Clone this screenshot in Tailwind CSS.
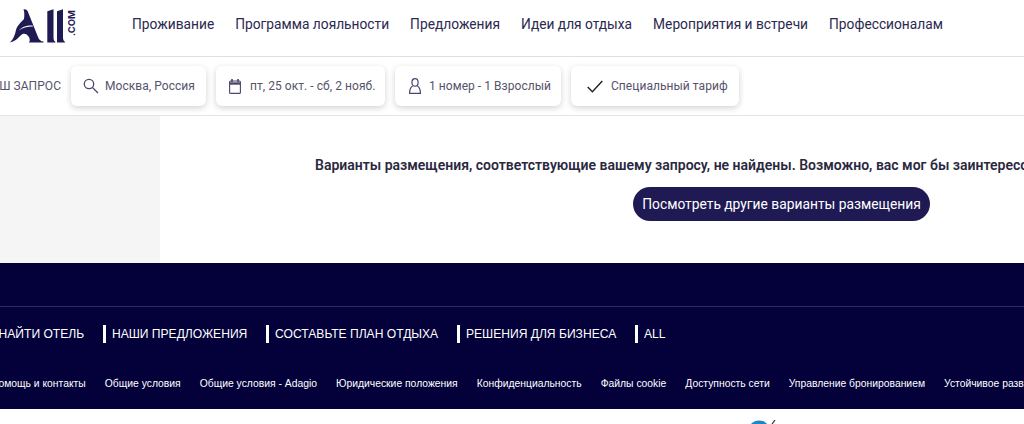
<!DOCTYPE html>
<html lang="ru">
<head>
<meta charset="utf-8">
<script src="https://cdn.jsdelivr.net/npm/@tailwindcss/browser@4"></script>
</head>
<body class="w-[1024px] h-[424px] overflow-hidden bg-white font-['Roboto',sans-serif]">
<header class="h-[57px] flex items-center border-b border-[#e0e0e0]">
  <a class="w-[132px] h-[56px] shrink-0 block relative">
    <svg width="70" height="45" viewBox="0 0 70 45" fill="#1f1a54" class="block">
      <path d="M23.5 9.3C25.5 9 27 9.8 27.8 11.5L38 37C39 40 41 41.2 43.5 41.6V42.4H29C30 41 30 39.5 29 37C27 34 25 33 22.5 34C19 36 17 41 10 42.4C13.5 39 15 35 16 30C17 26 21 22 24 19C24.5 15 24.5 12 23.5 9.3Z"/>
      <path d="M18.5 30.5C22 27 26 25.2 32.5 25.4L33 26.6C27.5 26.4 23 27.8 18.5 30.5Z" fill="#fff"/>
      <path d="M47.3 11.2L53.5 9.2V37.6C53.5 40 54.2 41.2 55.4 41.8V42.4H47.3Z"/>
      <path d="M57 11.2L63 9.2V37.6C63 40 63.8 41.2 65 41.8V42.4H57Z"/>
    </svg>
    <span class="absolute left-[57px] top-[18px] w-[30px] h-[10px] flex items-center justify-center text-[9.5px] leading-[10px] font-bold text-[#1f1a54] -rotate-90 font-['Inter',sans-serif]">.COM</span>
  </a>
  <nav class="flex gap-[21px] mb-[8px] text-[13.75px] text-[#2b2950] whitespace-nowrap">
    <a>Проживание</a><a>Программа лояльности</a><a>Предложения</a><a>Идеи для отдыха</a><a>Мероприятия и встречи</a><a>Профессионалам</a>
  </nav>
</header>

<section class="h-[59px] flex items-center gap-[10px] border-b border-[#e4e4e4] whitespace-nowrap text-[12px] text-[#55536b] tracking-[0.05px]">
  <span class="w-[61px] shrink-0 flex justify-end overflow-hidden"><span class="shrink-0">ВАШ ЗАПРОС</span></span>
  <div class="w-[135px] h-[40px] flex items-center gap-[6px] pl-[12px] rounded-md bg-white shadow-[0_2px_6px_rgba(0,0,0,0.18)]">
    <svg width="16" height="16" viewBox="0 0 16 16" fill="none" stroke="#4a4670" stroke-width="1.3"><circle cx="6" cy="6" r="4.7"/><path d="M9.5 9.5L15 15"/></svg>
    <span>Москва, Россия</span>
  </div>
  <div class="w-[169px] h-[40px] flex items-center gap-[9px] pl-[13px] rounded-md bg-white shadow-[0_2px_6px_rgba(0,0,0,0.18)]">
    <svg width="12" height="15" viewBox="0 0 12 15" fill="none" stroke="#4a4670" stroke-width="1.1"><rect x="0.6" y="2" width="10.8" height="12.4" rx="1"/><path d="M0.6 4.5H11.4" stroke-width="2.4"/><path d="M3 0V3M9 0V3" stroke-width="1.6"/></svg>
    <span>пт, 25 окт. - сб, 2 нояб.</span>
  </div>
  <div class="w-[166px] h-[40px] flex items-center gap-[8px] pl-[14px] rounded-md bg-white shadow-[0_2px_6px_rgba(0,0,0,0.18)]">
    <svg width="12" height="16" viewBox="0 0 12 16" fill="none" stroke="#4a4670" stroke-width="1.2"><ellipse cx="6" cy="4.4" rx="3.1" ry="3.7"/><path d="M3.6 8C1.6 9.2.6 11.5.6 15.3H11.4C11.4 11.5 10.4 9.2 8.4 8"/></svg>
    <span>1 номер - 1 Взрослый</span>
  </div>
  <div class="w-[168px] h-[40px] flex items-center gap-[8px] pl-[16px] rounded-md bg-white shadow-[0_2px_6px_rgba(0,0,0,0.18)]">
    <svg width="16" height="13" viewBox="0 0 16 13" fill="none" stroke="#222" stroke-width="1.4"><path d="M.7 7L5.4 11.8L15.3 1"/></svg>
    <span>Специальный тариф</span>
  </div>
</section>

<main class="h-[147px] flex">
  <aside class="w-[160px] shrink-0 bg-[#f5f5f5]"></aside>
  <div class="flex-1 min-w-0 overflow-hidden pl-[155px] pt-[40px]">
    <p class="text-[14px] leading-[18px] font-semibold text-[#2a2840] whitespace-nowrap">Варианты размещения, соответствующие вашему запросу, не найдены. Возможно, вас мог бы заинтересовать другой вариант</p>
    <a class="mt-[13px] ml-[318px] w-[297px] h-[34px] flex items-center justify-center rounded-full bg-[#1f1a54] text-white text-[13.8px] whitespace-nowrap">Посмотреть другие варианты размещения</a>
  </div>
</main>

<footer class="h-[146px] bg-[#03003a] pt-[43px] text-white font-['Liberation_Sans',sans-serif] whitespace-nowrap">
  <div class="h-px bg-[#2f2b5f]"></div>
  <div class="flex items-center h-[16px] mt-[19px] text-[12.1px] -ml-[1.5px] gap-[18.75px]">
    <a>НАЙТИ ОТЕЛЬ</a>
    <a class="border-l-[3px] border-white pl-[6px]">НАШИ ПРЕДЛОЖЕНИЯ</a>
    <a class="border-l-[3px] border-white pl-[6px]">СОСТАВЬТЕ ПЛАН ОТДЫХА</a>
    <a class="border-l-[3px] border-white pl-[6px]">РЕШЕНИЯ ДЛЯ БИЗНЕСА</a>
    <a class="border-l-[3px] border-white pl-[6px]">ALL</a>
  </div>
  <div class="flex items-center h-[14px] mt-[35px] text-[10.35px] -ml-[9px] gap-[19px]">
    <a>Помощь и контакты</a><a>Общие условия</a><a>Общие условия - Adagio</a><a>Юридические положения</a><a>Конфиденциальность</a><a>Файлы cookie</a><a>Доступность сети</a><a>Управление бронированием</a><a>Устойчивое развитие</a>
  </div>
</footer>

<div class="h-[15px] relative overflow-hidden">
  <svg width="30" height="15" viewBox="0 0 30 15" class="absolute left-[750px] top-[11px]">
    <ellipse cx="9" cy="7" rx="9" ry="6.5" fill="#1b87c9"/><path d="M25 0L22 4" stroke="#333" stroke-width="1.2" fill="none"/>
  </svg>
</div>
</body>
</html>
